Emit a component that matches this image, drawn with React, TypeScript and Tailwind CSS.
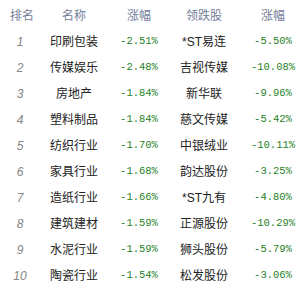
const rows = [
  { rank: 1, name: "印刷包装", pct: "-2.51%", stock: "*ST易连", stockPct: "-5.50%" },
  { rank: 2, name: "传媒娱乐", pct: "-2.48%", stock: "吉视传媒", stockPct: "-10.08%" },
  { rank: 3, name: "房地产", pct: "-1.84%", stock: "新华联", stockPct: "-9.96%" },
  { rank: 4, name: "塑料制品", pct: "-1.84%", stock: "慈文传媒", stockPct: "-5.42%" },
  { rank: 5, name: "纺织行业", pct: "-1.70%", stock: "中银绒业", stockPct: "-10.11%" },
  { rank: 6, name: "家具行业", pct: "-1.68%", stock: "韵达股份", stockPct: "-3.25%" },
  { rank: 7, name: "造纸行业", pct: "-1.66%", stock: "*ST九有", stockPct: "-4.80%" },
  { rank: 8, name: "建筑建材", pct: "-1.59%", stock: "正源股份", stockPct: "-10.29%" },
  { rank: 9, name: "水泥行业", pct: "-1.59%", stock: "狮头股份", stockPct: "-5.79%" },
  { rank: 10, name: "陶瓷行业", pct: "-1.54%", stock: "松发股份", stockPct: "-3.06%" },
];

const cjk = "font-['Liberation_Sans','Noto_Sans_CJK_SC',sans-serif]";
const mono = "font-['Liberation_Mono','Noto_Sans_CJK_SC',monospace]";
const cols = "grid grid-cols-[40px_68px_62px_68px_65px] items-center h-[26px]";

export default function App() {
  return (
    <div className="w-[303px] h-[292px] bg-white pt-[3px] overflow-hidden">
      <div className={`${cols} ${cjk} text-[12px] text-[#74809b]`}>
        <div className="text-center pl-[4px]">排名</div>
        <div className="text-center">名称</div>
        <div className="text-center">涨幅</div>
        <div className="text-center">领跌股</div>
        <div className="text-center pl-[5px]">涨幅</div>
      </div>
      {rows.map((r) => (
        <div key={r.rank} className={cols}>
          <div className="text-center italic font-['Liberation_Sans',sans-serif] text-[12px] text-[#858585]">
            {r.rank}
          </div>
          <div className={`text-center ${cjk} text-[12px] text-[#222]`}>{r.name}</div>
          <div className={`text-center ${mono} text-[10.5px] text-[#267f26]`}>{r.pct}</div>
          <div className={`text-center ${cjk} text-[12px] text-[#222]`}>{r.stock}</div>
          <div className={`text-center pl-[5px] ${mono} text-[10.5px] text-[#267f26]`}>{r.stockPct}</div>
        </div>
      ))}
    </div>
  );
}
